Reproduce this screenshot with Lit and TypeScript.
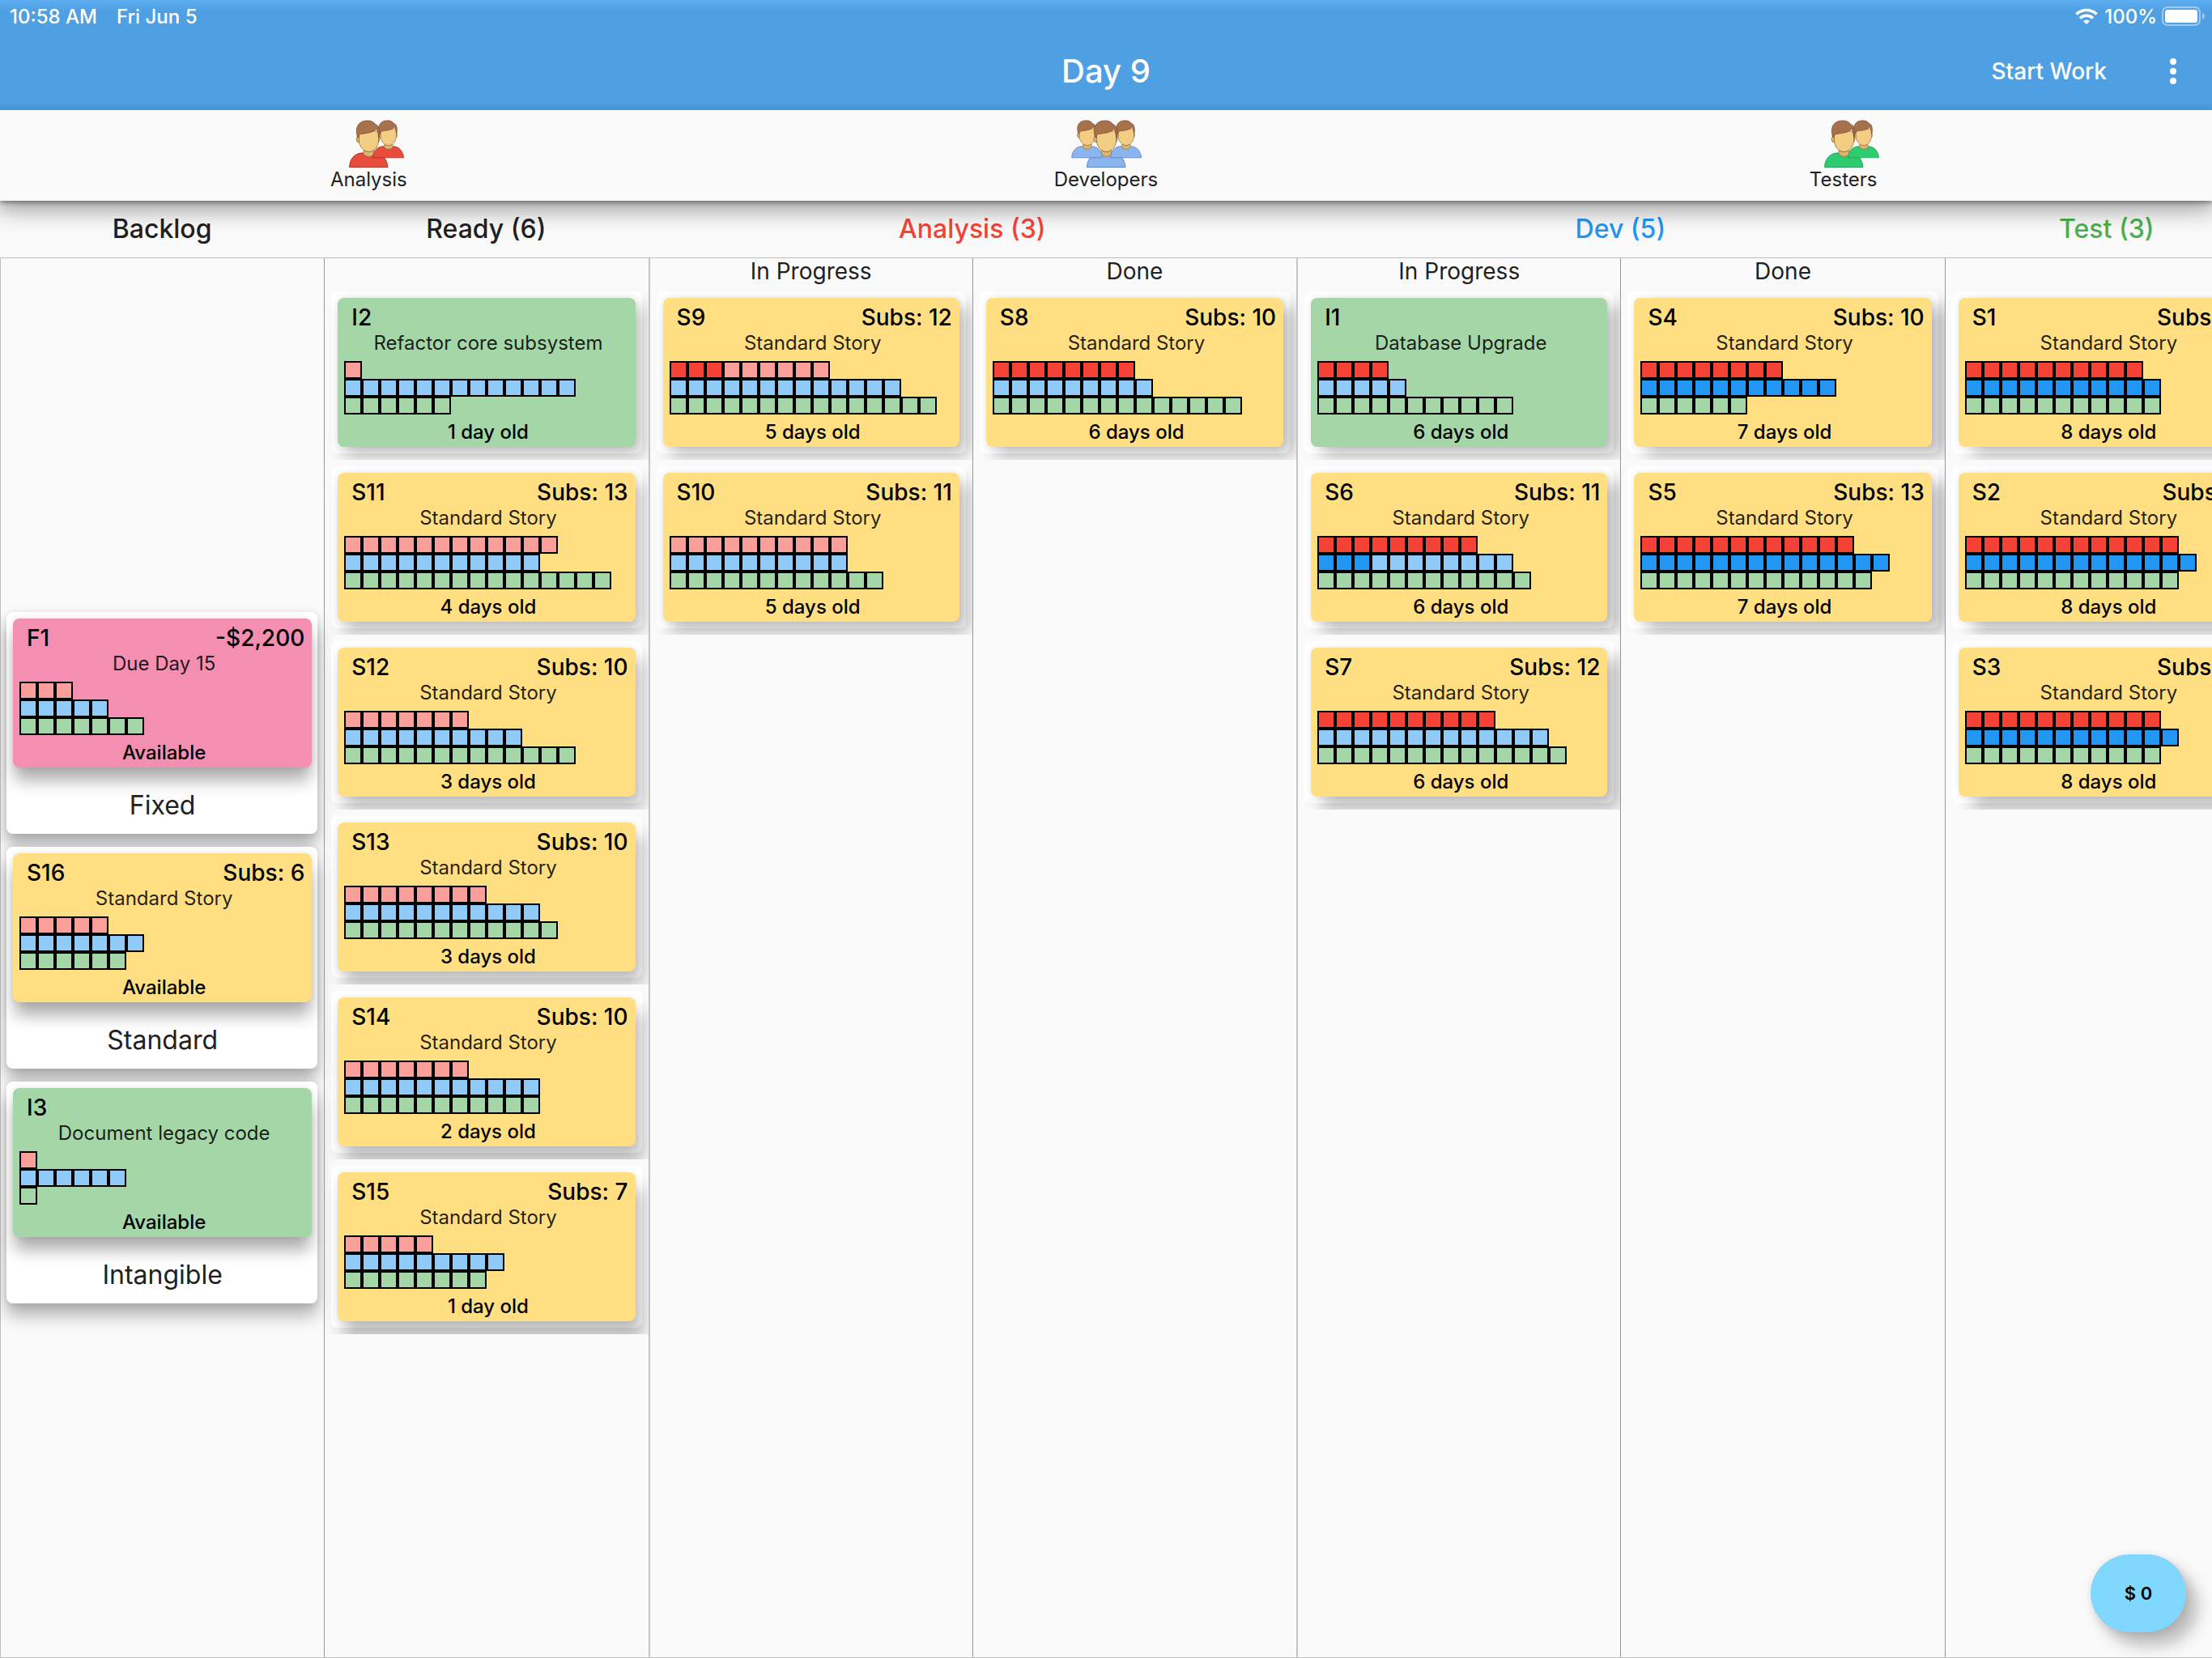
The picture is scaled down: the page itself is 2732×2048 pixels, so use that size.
import { LitElement, html, svg, css, nothing } from "lit";
import { customElement, property } from "lit/decorators.js";
import { classMap } from "lit/directives/class-map.js";
import { styleMap } from "lit/directives/style-map.js";

type Kind = "standard" | "fixed" | "intangible";
/** Work in one lane of a story: [total, finished]. */
type Lane = [number, number];

interface Story {
  id: string;
  kind: Kind;
  value?: string;
  title: string;
  lanes: [Lane, Lane, Lane];
  footer: string;
}

interface Column {
  sub?: string;
  stories: Story[];
}

const days = (n: number) => `${n} day${n === 1 ? "" : "s"} old`;

const standard = (n: number, subs: number, age: number, a: Lane, d: Lane, t: Lane): Story => ({
  id: `S${n}`, kind: "standard", value: `Subs: ${subs}`, title: "Standard Story",
  lanes: [a, d, t], footer: days(age),
});

const backlog: { label: string; story: Story }[] = [
  { label: "Fixed", story: { id: "F1", kind: "fixed", value: "-$2,200", title: "Due Day 15", lanes: [[3, 0], [5, 0], [7, 0]], footer: "Available" } },
  { label: "Standard", story: { ...standard(16, 6, 0, [5, 0], [7, 0], [6, 0]), footer: "Available" } },
  { label: "Intangible", story: { id: "I3", kind: "intangible", title: "Document legacy code", lanes: [[1, 0], [6, 0], [1, 0]], footer: "Available" } },
];

const columns: Column[] = [
  { stories: [
    { id: "I2", kind: "intangible", title: "Refactor core subsystem", lanes: [[1, 0], [13, 0], [6, 0]], footer: days(1) },
    standard(11, 13, 4, [12, 0], [11, 0], [15, 0]),
    standard(12, 10, 3, [7, 0], [10, 0], [13, 0]),
    standard(13, 10, 3, [8, 0], [11, 0], [12, 0]),
    standard(14, 10, 2, [7, 0], [11, 0], [11, 0]),
    standard(15, 7, 1, [5, 0], [9, 0], [8, 0]),
  ] },
  { sub: "In Progress", stories: [
    standard(9, 12, 5, [9, 3], [13, 0], [15, 0]),
    standard(10, 11, 5, [10, 0], [10, 0], [12, 0]),
  ] },
  { sub: "Done", stories: [standard(8, 10, 6, [8, 8], [9, 0], [14, 0])] },
  { sub: "In Progress", stories: [
    { id: "I1", kind: "intangible", title: "Database Upgrade", lanes: [[4, 4], [5, 0], [11, 0]], footer: days(6) },
    standard(6, 11, 6, [9, 9], [11, 3], [12, 0]),
    standard(7, 12, 6, [10, 10], [13, 0], [14, 0]),
  ] },
  { sub: "Done", stories: [
    standard(4, 10, 7, [8, 8], [11, 11], [6, 0]),
    standard(5, 13, 7, [12, 12], [14, 14], [13, 0]),
  ] },
  { stories: [
    standard(1, 10, 8, [10, 10], [11, 11], [11, 0]),
    standard(2, 11, 8, [12, 12], [13, 13], [12, 0]),
    standard(3, 10, 8, [11, 11], [12, 12], [11, 0]),
  ] },
];

@customElement("story-card")
class StoryCard extends LitElement {
  @property({ attribute: false }) story!: Story;

  static styles = css`
    :host { display: block; }
    .card {
      box-sizing: border-box;
      height: 184px;
      padding: 4px 4px 0 8px;
      border-radius: 8px;
      color: #000;
      box-shadow: var(--card-shadow);
    }
    .standard { background: #ffdf82; }
    .fixed { background: #f48fb1; }
    .intangible { background: #a5d6a7; }
    .top {
      display: flex;
      justify-content: space-between;
      padding: 0 5px 0 9px;
      font-size: 28px;
      line-height: 40px;
      font-weight: 450;
    }
    .title { font-size: 24px; line-height: 24px; text-align: center; white-space: nowrap; color: rgba(0, 0, 0, 0.87); }
    .lanes { margin-top: 10px; }
    .lane { display: flex; height: 22px; }
    .unit { box-sizing: border-box; width: 22px; height: 22px; border: 2px solid #000; }
    .analysis { background: #fa9f99; }
    .dev { background: #90caf9; }
    .test { background: #a5d6a7; }
    .analysis.done { background: #f44336; }
    .dev.done { background: #2196f3; }
    .footer { margin-top: 6px; font-size: 24px; line-height: 32px; font-weight: 500; text-align: center; }
  `;

  render() {
    const s = this.story;
    const names = ["analysis", "dev", "test"];
    return html`
      <article class="card ${s.kind}">
        <div class="top"><span>${s.id}</span>${s.value ? html`<span>${s.value}</span>` : nothing}</div>
        <div class="title">${s.title}</div>
        <div class="lanes">
          ${s.lanes.map(([total, done], lane) => html`
            <div class="lane">
              ${Array.from({ length: total }, (_, i) => html`
                <span class=${classMap({ unit: true, [names[lane]]: true, done: i < done })}></span>`)}
            </div>`)}
        </div>
        <div class="footer">${s.footer}</div>
      </article>
    `;
  }
}

const person = (shirt: string, line: string) => {
  const face = svg`
    <path d="M34 21q-2 2 0 6l3 1v-8zM61 21q2 2 0 6l-3 1v-8z" fill="#dfb670" stroke="#8a6a3a" stroke-width=".8"/>
    <path d="M36.5 14h24v12c0 6-5 13.500-12 13.500s-12-7.500-12-13.500z" fill="#f3cd83" stroke="#8a6a3a" stroke-width=".8"/>
    <path d="M35 22C31 12 34 1 47 1c5 0 8 2 10 5 4 0 6 8 4 16l-2-9-1-2c-5 6-13 5-21 7z" fill="#a7714c" stroke="#7a4b2c" stroke-width=".8"/>`;
  const torso = svg`
    <path d="M24.500 58.500C25 48 31 42 39 41h18c8 1 14 7 15 17.500z" fill=${shirt} stroke=${line} stroke-width=".8"/>
    <path d="M42 37.500q6 4 13 0v5q-6 6-13 0z" fill="#dcb56e" stroke="#8a6a3a" stroke-width=".7"/>`;
  return { face, torso };
};

@customElement("team-icon")
class TeamIcon extends LitElement {
  @property() shirt = "#e74c3c";
  @property() line = "#9c2015";
  @property({ type: Boolean }) trio = false;

  static styles = css`
    :host { display: block; }
    .icon { display: block; width: 96px; height: 60px; }
  `;

  render() {
    const p = person(this.shirt, this.line);
    const right = "translate(34 0) scale(.8)";
    const left = "translate(-14 0) scale(.8)";
    return html`
      <svg class="icon" viewBox="0 0 96 60" aria-hidden="true">
        ${p.torso}
        ${this.trio ? svg`<g transform=${left}>${p.torso}${p.face}</g>` : nothing}
        <g transform=${right}>${p.torso}${p.face}</g>
        ${p.face}
      </svg>
    `;
  }
}

@customElement("app-root")
class AppRoot extends LitElement {
  static styles = css`
    :host {
      display: flex;
      flex-direction: column;
      position: relative;
      min-height: 100vh;
      overflow: hidden;
      background: #fafafa;
      color: #212121;
      font-family: Inter, "Liberation Sans", sans-serif;
    }
    button { border: 0; padding: 0; background: none; color: inherit; font: inherit; cursor: pointer; }

    .bar {
      height: 136px;
      color: #fff;
      background:
        linear-gradient(#5cacf0, #4f9fe300 14px),
        linear-gradient(to top, #4894d6, #4f9fe300 10px),
        #4f9fe3;
    }
    .status {
      display: flex;
      align-items: center;
      height: 40px;
      padding: 0 8px 0 12px;
      font-size: 24px;
      font-weight: 450;
    }
    .date { margin-left: 24px; }
    .wifi { width: 28px; height: 20px; margin: 0 8px 0 auto; }
    .battery { width: 54px; height: 24px; margin-left: 6px; }
    .toolbar {
      display: grid;
      grid-template-columns: 1fr auto 1fr;
      align-items: center;
      height: 96px;
    }
    .day { grid-column: 2; margin: 0; font-size: 40px; line-height: 48px; font-weight: 500; }
    .actions { display: flex; justify-content: flex-end; align-items: center; }
    .start { font-size: 28px; font-weight: 500; }
    .more { width: 96px; height: 96px; margin-left: 34px; }
    .dots { display: block; margin: auto; width: 8px; height: 32px; }

    .teams {
      display: grid;
      grid-template-columns: repeat(3, 1fr);
      height: 112px;
      background: #fafafa;
      box-shadow: 0 6px 28px 4px rgba(0, 0, 0, 0.4), 0 2px 6px rgba(0, 0, 0, 0.4);
      clip-path: inset(0 0 -60px 0);
      z-index: 1;
    }
    .team {
      display: flex;
      flex-direction: column;
      align-items: center;
      padding-top: 12px;
      font-size: 24px;
      line-height: 28px;
    }

    .board { display: flex; flex-direction: column; flex: 1; }
    .heads, .columns {
      display: grid;
      grid-template-columns: repeat(7, calc(100% / 7 + 10px));
    }
    .heads { height: 70px; }
    .head { margin: 0; font-size: 32px; line-height: 70px; font-weight: 500; text-align: center; }
    .wide { grid-column: span 2; }
    .red { color: #f44336; }
    .blue { color: #2196f3; }
    .green { color: #4caf50; }
    .columns {
      flex: 1;
      border: solid #bfbfbf;
      border-width: 1px 0;
    }
    .column { box-sizing: border-box; min-width: 0; border-left: 1px solid #979797; }
    .column:nth-child(1) { border-left-color: #bfbfbf; }
    .column:nth-child(3), .column:nth-child(5) { border-left: 2px solid #c4c4c4; }
    .sub { height: 33px; font-size: 28px; line-height: 32px; text-align: center; }
    .cell {
      box-sizing: border-box;
      height: 216px;
      padding: 8px 8px 8px 8px;
      overflow: hidden;
    }
    .slot {
      padding: 8px;
      border-radius: 8px;
      background: #fff;
      --x: calc(8px + var(--col) * 2px);
      --y: calc(10px + var(--row) * 2px);
      box-shadow: var(--x) var(--y) 20px rgba(0, 0, 0, 0.05);
      --card-shadow: var(--x) var(--y) 20px rgba(0, 0, 0, 0.24), 0 0 8px rgba(0, 0, 0, 0.08);
    }
    .backlog {
      display: flex;
      flex-direction: column;
      justify-content: center;
      gap: 16px;
      padding: 0 8px 0 7px;
    }
    .class {
      box-sizing: border-box;
      height: 274px;
      padding: 8px 7px 0 8px;
      border-radius: 8px;
      background: #fff;
      box-shadow: 0 16px 20px rgba(0, 0, 0, 0.27), 0 2px 12px rgba(0, 0, 0, 0.12);
      --card-shadow: 0 18px 20px -2px rgba(0, 0, 0, 0.32), 0 0 8px rgba(0, 0, 0, 0.1);
    }
    .label { font-size: 32px; line-height: 94px; text-align: center; }

    .money {
      position: absolute;
      right: 32px;
      bottom: 32px;
      width: 118px;
      height: 96px;
      border-radius: 48px;
      background: #80d8ff;
      color: #000;
      font-size: 22px;
      font-weight: 600;
      box-shadow: 14px 16px 20px rgba(0, 0, 0, 0.26), 0 2px 12px rgba(0, 0, 0, 0.1);
      z-index: 2;
    }
  `;

  render() {
    return html`
      <header class="bar">
        <div class="status">
          <span>10:58 AM</span><span class="date">Fri Jun 5</span>
          <svg class="wifi" viewBox="0 0 28 20" fill="none" stroke="#fff" stroke-width="3.600" aria-hidden="true">
            <path d="M1.500 7.500a18 18 0 0 1 25 0M6 12.500a11.500 11.500 0 0 1 16 0"/>
            <path d="M14 20l-4-4a6 6 0 0 1 8 0z" fill="#fff" stroke="none"/>
          </svg>
          <span>100%</span>
          <svg class="battery" viewBox="0 0 54 24" aria-hidden="true">
            <rect x="1" y="1" width="46" height="22" rx="6" fill="none" stroke="#fff" stroke-opacity=".45" stroke-width="2"/>
            <rect x="4" y="4" width="40" height="16" rx="3" fill="#fff"/>
            <path d="M50 8q3 1 3 4t-3 4z" fill="#fff" fill-opacity=".45"/>
          </svg>
        </div>
        <div class="toolbar">
          <h1 class="day">Day 9</h1>
          <div class="actions">
            <button class="start">Start Work</button>
            <button class="more" aria-label="More options">
              <svg class="dots" viewBox="0 0 8 32" fill="#fff" aria-hidden="true">
                <circle cx="4" cy="4" r="4"/><circle cx="4" cy="16" r="4"/><circle cx="4" cy="28" r="4"/>
              </svg>
            </button>
          </div>
        </div>
      </header>
      <section class="teams">
        <div class="team"><team-icon shirt="#e74c3c" line="#9c2015"></team-icon>Analysis</div>
        <div class="team"><team-icon shirt="#8bb5ef" line="#4571b3" trio></team-icon>Developers</div>
        <div class="team"><team-icon shirt="#2ecc71" line="#17924b"></team-icon>Testers</div>
      </section>
      <main class="board">
        <div class="heads">
          <h2 class="head">Backlog</h2>
          <h2 class="head">Ready (6)</h2>
          <h2 class="head wide red">Analysis (3)</h2>
          <h2 class="head wide blue">Dev (5)</h2>
          <h2 class="head green">Test (3)</h2>
        </div>
        <div class="columns">
          <section class="column backlog">
            ${backlog.map((b) => html`
              <div class="class">
                <story-card .story=${b.story}></story-card>
                <div class="label">${b.label}</div>
              </div>`)}
          </section>
          ${columns.map((c, col) => html`
            <section class="column">
              <div class="sub">${c.sub ?? nothing}</div>
              ${c.stories.map((s, row) => html`
                <div class="cell">
                  <div class="slot" style=${styleMap({ "--col": `${col}`, "--row": `${row}` })}>
                    <story-card .story=${s}></story-card>
                  </div>
                </div>`)}
            </section>`)}
        </div>
      </main>
      <button class="money">$ 0</button>
    `;
  }
}
